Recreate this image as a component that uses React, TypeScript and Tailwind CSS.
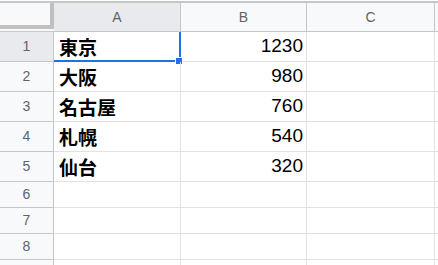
import React from 'react'

const rows = [
  { n: 1, city: '東京', value: '1230' },
  { n: 2, city: '大阪', value: '980' },
  { n: 3, city: '名古屋', value: '760' },
  { n: 4, city: '札幌', value: '540' },
  { n: 5, city: '仙台', value: '320' },
  { n: 6, city: '', value: '' },
  { n: 7, city: '', value: '' },
  { n: 8, city: '', value: '' },
]

export default function App() {
  return (
    <div className="w-[438px] h-[265px] overflow-hidden bg-white pt-[1px] font-['Liberation_Sans',Arial,sans-serif]">
      {/* column headers */}
      <div className="flex h-[31px] border-t-2 border-[#c7c7c7]">
        <div className="w-[54px] shrink-0 bg-[#f8f9fa] border-b border-[#c7c7c7]">
          <div className="h-[26px] border-r-4 border-b-4 border-[#c0c0c0]" />
        </div>
        <div className="w-[127px] shrink-0 flex items-center justify-center bg-[#e8eaed] border-b border-r border-[#c7c7c7] text-[14px] text-[#5f6368]">
          A
        </div>
        <div className="w-[126px] shrink-0 flex items-center justify-center bg-[#f8f9fa] border-b border-r border-[#c7c7c7] text-[14px] text-[#5f6368]">
          B
        </div>
        <div className="w-[128px] shrink-0 flex items-center justify-center bg-[#f8f9fa] border-b border-r border-[#c7c7c7] text-[14px] text-[#5f6368]">
          C
        </div>
        <div className="flex-1 bg-[#f8f9fa] border-b border-[#c7c7c7]" />
      </div>

      {rows.map((r) => (
        <div key={r.n} className={`flex ${r.n <= 5 ? 'h-[30px]' : 'h-[26px]'}`}>
          <div
            className={`w-[54px] shrink-0 flex items-center justify-center border-b border-r border-[#c7c7c7] text-[14px] text-[#5f6368] ${
              r.n === 1 ? 'bg-[#e8eaed]' : 'bg-[#f8f9fa]'
            }`}
          >
            {r.n}
          </div>
          <div className="relative w-[127px] shrink-0 flex items-end pb-[3px] pl-[5px] border-b border-r border-[#e2e2e2] text-[19px] leading-[22px] font-bold text-black font-['Noto_Sans_CJK_JP',sans-serif]">
            {r.city}
            {r.n === 1 && (
              <>
                <div className="absolute right-[-1px] top-0 bottom-[-1px] w-[2px] bg-[#1a73e8]" />
                <div className="absolute left-0 right-[-1px] bottom-[-1px] h-[2px] bg-[#1a73e8]" />
                <div className="absolute right-[-3px] bottom-[-4px] w-[8px] h-[8px] bg-[#1a73e8] border border-white" />
              </>
            )}
          </div>
          <div className="w-[126px] shrink-0 flex items-end justify-end pb-[5px] pr-[3px] border-b border-r border-[#e2e2e2] text-[19px] leading-[20px] text-black">
            {r.value}
          </div>
          <div className="w-[128px] shrink-0 border-b border-r border-[#e2e2e2]" />
          <div className="flex-1 border-b border-[#e2e2e2]" />
        </div>
      ))}
      {/* partial row 9 */}
      <div className="flex h-[26px]">
        <div className="w-[54px] shrink-0 bg-[#f8f9fa] border-r border-[#c7c7c7]" />
        <div className="w-[127px] shrink-0 border-r border-[#e2e2e2]" />
        <div className="w-[126px] shrink-0 border-r border-[#e2e2e2]" />
        <div className="w-[128px] shrink-0 border-r border-[#e2e2e2]" />
      </div>
    </div>
  )
}
